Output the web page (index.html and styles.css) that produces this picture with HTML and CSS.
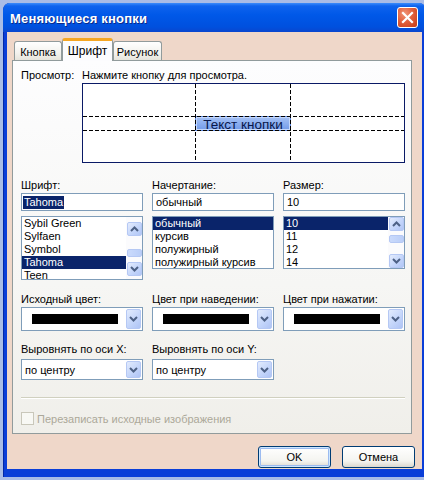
FILE: index.html
```html
<!DOCTYPE html>
<html lang="ru">
<head>
<meta charset="utf-8">
<title>Меняющиеся кнопки</title>
<link rel="stylesheet" href="styles.css">
</head>
<body>
<div class="window">
  <div class="titlebar">
    <span class="title">Меняющиеся кнопки</span>
    <span class="close"><svg width="21" height="21" viewBox="0 0 21 21"><path d="M6 6 L15 15 M15 6 L6 15" stroke="#fff" stroke-width="2.2" stroke-linecap="square"/></svg></span>
  </div>
  <div class="client">
    <div class="tabs">
      <div class="tab t1">Кнопка</div>
      <div class="tab t2 active">Шрифт</div>
      <div class="tab t3">Рисунок</div>
    </div>
    <div class="panel">
      <div class="preview-row">
        <div class="pv-lbl">Просмотр:</div>
        <div class="pv-right">
          <div class="hint">Нажмите кнопку для просмотра.</div>
          <div class="pv-box">
            <svg width="323" height="80" viewBox="0 0 323 80">
              <defs>
                <linearGradient id="bg" x1="0" y1="0" x2="0" y2="1">
                  <stop offset="0" stop-color="#A8C4F6"/>
                  <stop offset="1" stop-color="#6F98E8"/>
                </linearGradient>
              </defs>
              <rect x="0.5" y="0.5" width="322" height="79" fill="#fff" stroke="#0A1A66"/>
              <rect x="113" y="33" width="96" height="15" fill="url(#bg)"/>
              <rect x="113.5" y="33.5" width="95" height="14" fill="none" stroke="#5A86DC" stroke-width="1"/>
              <rect x="114.5" y="34.5" width="93" height="12" fill="none" stroke="#C6D8FA" stroke-width="1"/>
              <text x="161" y="45.5" text-anchor="middle" class="pv-text">Текст кнопки</text>
              <g stroke="#000" stroke-width="1" stroke-dasharray="4 2">
                <line x1="113.5" y1="1" x2="113.5" y2="79"/>
                <line x1="208.5" y1="1" x2="208.5" y2="79"/>
                <line x1="1" y1="33.5" x2="322" y2="33.5"/>
                <line x1="1" y1="47.5" x2="322" y2="47.5"/>
              </g>
            </svg>
          </div>
        </div>
      </div>

      <div class="grid3 font-grid">
        <div class="field">
          <div class="lbl">Шрифт:</div>
          <div class="input"><span class="sel-text">Tahoma</span></div>
          <div class="list list-font">
            <div class="items">
              <div class="item">Sybil Green</div>
              <div class="item">Sylfaen</div>
              <div class="item">Symbol</div>
              <div class="item sel">Tahoma</div>
              <div class="item">Teen</div>
            </div>
            <div class="sbar sbar-font">
              <div class="sbtn up"><svg width="9" height="6" viewBox="0 0 9 6"><path d="M1 5 L4.5 1.5 L8 5" stroke="#4D6185" stroke-width="2" fill="none"/></svg></div>
              <div class="thumb"></div>
              <div class="sbtn down"><svg width="9" height="6" viewBox="0 0 9 6"><path d="M1 1 L4.5 4.5 L8 1" stroke="#4D6185" stroke-width="2" fill="none"/></svg></div>
            </div>
          </div>
        </div>
        <div class="field">
          <div class="lbl">Начертание:</div>
          <div class="input">обычный</div>
          <div class="list list-short">
            <div class="items">
              <div class="item sel">обычный</div>
              <div class="item">курсив</div>
              <div class="item">полужирный</div>
              <div class="item">полужирный курсив</div>
            </div>
          </div>
        </div>
        <div class="field">
          <div class="lbl">Размер:</div>
          <div class="input">10</div>
          <div class="list list-short">
            <div class="items">
              <div class="item sel">10</div>
              <div class="item">11</div>
              <div class="item">12</div>
              <div class="item">14</div>
            </div>
            <div class="sbar sbar-size">
              <div class="sbtn up"><svg width="9" height="6" viewBox="0 0 9 6"><path d="M1 5 L4.5 1.5 L8 5" stroke="#4D6185" stroke-width="2" fill="none"/></svg></div>
              <div class="thumb"></div>
              <div class="sbtn down"><svg width="9" height="6" viewBox="0 0 9 6"><path d="M1 1 L4.5 4.5 L8 1" stroke="#4D6185" stroke-width="2" fill="none"/></svg></div>
            </div>
          </div>
        </div>
      </div>

      <div class="grid3 color-grid">
        <div class="field">
          <div class="lbl">Исходный цвет:</div>
          <div class="combo combo-color"><span class="swatch"></span><span class="dd"><svg width="9" height="6" viewBox="0 0 9 6"><path d="M1 1 L4.5 4.5 L8 1" stroke="#4D6185" stroke-width="2" fill="none"/></svg></span></div>
        </div>
        <div class="field">
          <div class="lbl">Цвет при наведении:</div>
          <div class="combo combo-color"><span class="swatch"></span><span class="dd"><svg width="9" height="6" viewBox="0 0 9 6"><path d="M1 1 L4.5 4.5 L8 1" stroke="#4D6185" stroke-width="2" fill="none"/></svg></span></div>
        </div>
        <div class="field">
          <div class="lbl">Цвет при нажатии:</div>
          <div class="combo combo-color"><span class="swatch"></span><span class="dd"><svg width="9" height="6" viewBox="0 0 9 6"><path d="M1 1 L4.5 4.5 L8 1" stroke="#4D6185" stroke-width="2" fill="none"/></svg></span></div>
        </div>
      </div>

      <div class="grid3 align-grid">
        <div class="field">
          <div class="lbl">Выровнять по оси X:</div>
          <div class="combo combo-text"><span class="ctext">по центру</span><span class="dd"><svg width="9" height="6" viewBox="0 0 9 6"><path d="M1 1 L4.5 4.5 L8 1" stroke="#4D6185" stroke-width="2" fill="none"/></svg></span></div>
        </div>
        <div class="field">
          <div class="lbl">Выровнять по оси Y:</div>
          <div class="combo combo-text"><span class="ctext">по центру</span><span class="dd"><svg width="9" height="6" viewBox="0 0 9 6"><path d="M1 1 L4.5 4.5 L8 1" stroke="#4D6185" stroke-width="2" fill="none"/></svg></span></div>
        </div>
      </div>

      <div class="separator"></div>

      <div class="check-row">
        <span class="checkbox"></span>
        <span class="check-text">Перезаписать исходные изображения</span>
      </div>
    </div>

    <div class="buttons">
      <div class="btn default">OK</div>
      <div class="btn">Отмена</div>
    </div>
  </div>
</div>
</body>
</html>
```

FILE: styles.css
```css
* { box-sizing: border-box; }

html, body {
  margin: 0;
  padding: 0;
}

body {
  background: #A9BCE6;
  font-family: "Liberation Sans", Arial, sans-serif;
  font-size: 11px;
  color: #000;
  width: 424px;
  height: 480px;
  overflow: hidden;
}

.window {
  margin: 3px 0 0 3px;
  width: 423px;
  background: #0A3ED8;
  border-left: 1px solid #0027A8;
  padding: 0 4px 8px 3px;
  border-radius: 7px 7px 0 0;
}

.titlebar {
  height: 29px;
  margin: 0 -4px 0 -4px;
  border-radius: 7px 7px 0 0;
  background: linear-gradient(#3C8CFB 0px, #0E63EE 3px, #0058E8 12px, #0050DE 24px, #0A46CE 29px);
  display: flex;
  align-items: center;
  justify-content: space-between;
  padding: 0 8px 0 7px;
}

.title {
  color: #fff;
  font-weight: bold;
  font-size: 13px;
  letter-spacing: 0.2px;
  text-shadow: 1px 1px 0 #0A2A8A;
  padding-top: 1px;
}

.close {
  width: 21px;
  height: 21px;
  border: 1px solid #fff;
  border-radius: 3px;
  background: radial-gradient(circle at 35% 30%, #F0967A 0%, #E2603C 45%, #C83A14 100%);
  display: flex;
  align-items: center;
  justify-content: center;
}
.close svg { display: block; margin: -1px; }

.client {
  background: #EFD7C9;
  height: 437px;
  padding: 6px 0 0 5px;
}

.tabs {
  display: flex;
  align-items: flex-end;
  height: 22px;
  margin-left: 2px;
}

.tab {
  height: 19px;
  border: 1px solid #919B9C;
  border-bottom: none;
  border-radius: 3px 3px 0 0;
  background: linear-gradient(#FFFFFF, #F3F2EE 60%, #E6E4DC);
  display: flex;
  align-items: center;
  justify-content: center;
  padding-top: 1px;
}
.t1 { width: 48px; }
.t2 { width: 51px; }
.t3 { width: 49px; }

.tab.active {
  height: 23px;
  margin-bottom: -1px;
  position: relative;
  z-index: 1;
  background: #FCFCFE;
  border-top: 3px solid #F5A623;
  border-left-color: #919B9C;
  border-right-color: #919B9C;
  font-size: 12px;
  padding-top: 0;
}

.panel {
  width: 400px;
  height: 374px;
  border: 1px solid #919B9C;
  background: linear-gradient(#FDFDFE, #F6F6F4 60%, #F0EFEA);
  padding: 8px 6px 0 8px;
}

.preview-row {
  display: flex;
}
.pv-lbl {
  width: 61px;
  line-height: 13px;
}
.pv-right {
  display: flex;
  flex-direction: column;
}
.hint { line-height: 13px; }
.pv-box {
  margin-top: 1px;
  height: 80px;
}
.pv-box svg { display: block; }
.pv-text {
  font-family: "Liberation Sans", Arial, sans-serif;
  font-size: 13.5px;
  fill: #08174A;
}

.grid3 {
  display: grid;
  grid-template-columns: 122px 122px 122px;
  column-gap: 9px;
}

.font-grid { margin-top: 16px; align-items: start; }
.color-grid { margin-top: 13px; }
.align-grid { margin-top: 12px; }

.field { display: flex; flex-direction: column; }

.lbl { line-height: 13px; }

.input {
  margin-top: 1px;
  height: 18px;
  border: 1px solid #7F9DB9;
  background: #fff;
  padding-left: 3px;
  display: flex;
  align-items: center;
  white-space: nowrap;
}
.sel-text {
  background: #0A246A;
  color: #fff;
  line-height: 13px;
  padding: 0 1px;
  margin-left: -2px;
}

.list {
  margin-top: 5px;
  border: 1px solid #7F9DB9;
  background: #fff;
  display: flex;
  overflow: hidden;
}
.list-font { height: 64px; }
.list-short { height: 53px; }

.items {
  flex: 1;
  min-width: 0;
  overflow: hidden;
}
.item {
  height: 13px;
  line-height: 13px;
  padding-left: 2px;
  white-space: nowrap;
}
.item.sel {
  background: #0A246A;
  color: #fff;
}

.sbar {
  width: 16px;
  display: flex;
  flex-direction: column;
  align-items: center;
  background: #FBFBFD;
}
.sbar-font { padding-top: 5px; }
.sbar-font .thumb { margin-top: 13px; }
.sbar-font .down { margin-top: 5px; }
.sbar-size .thumb { margin-top: 4px; }
.sbar-size .down { margin-top: 11px; }

.sbtn {
  width: 15px;
  height: 14px;
  border: 1px solid #B5C8F4;
  border-radius: 2px;
  background: linear-gradient(135deg, #E4ECFD, #C2D4FA 60%, #B1C6F6);
  display: flex;
  align-items: center;
  justify-content: center;
}
.sbtn svg { display: block; }

.thumb {
  width: 15px;
  height: 8px;
  border: 1px solid #B5C8F4;
  border-radius: 2px;
  background: linear-gradient(90deg, #CADAFC, #BACEF8);
}

.combo {
  margin-top: 1px;
  border: 1px solid #7F9DB9;
  background: #fff;
  display: flex;
  align-items: center;
  padding: 1px;
}
.combo-color { height: 24px; }
.combo-text { margin-top: 3px; height: 21px; }

.swatch {
  width: 86px;
  height: 10px;
  background: #000;
  margin-left: 9px;
}
.ctext {
  flex: 1;
  padding-left: 2px;
}
.dd {
  margin-left: auto;
  width: 15px;
  height: 100%;
  border: 1px solid #B5C8F4;
  border-radius: 2px;
  background: linear-gradient(135deg, #E2EBFD, #C2D4FA 60%, #AFC4F5);
  display: flex;
  align-items: center;
  justify-content: center;
}
.dd svg { display: block; }

.separator {
  margin-top: 17px;
  width: 384px;
  border-top: 1px solid #D0D0BF;
  border-bottom: 1px solid #FFFFFF;
}

.check-row {
  margin-top: 12px;
  display: flex;
  align-items: center;
  height: 15px;
}
.checkbox {
  width: 13px;
  height: 13px;
  border: 1px solid #C9C7BA;
  background: #F8F8F4;
  margin-right: 3px;
}
.check-text { color: #ACA899; }

.buttons {
  margin-top: 12px;
  display: flex;
  justify-content: flex-end;
  gap: 11px;
  padding-right: 7px;
}

.btn {
  width: 73px;
  height: 22px;
  border: 1px solid #003C74;
  border-radius: 3px;
  background: linear-gradient(#FFFFFF, #F4F4F0 70%, #DCD8CE);
  display: flex;
  align-items: center;
  justify-content: center;
}
.btn.default {
  box-shadow: inset 0 0 0 1px #CEE7FF, inset 0 0 0 2px #9CBBF0;
}
```
